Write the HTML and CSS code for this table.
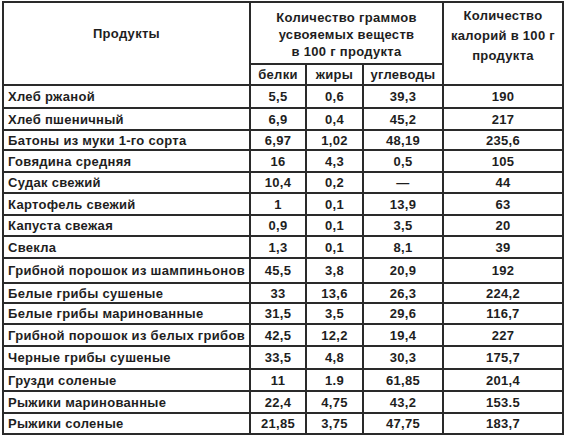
FILE: index.html
```html
<!DOCTYPE html>
<html lang="ru">
<head>
<meta charset="utf-8">
<link rel="stylesheet" href="styles.css">
</head>
<body>
<table class="tbl">
  <colgroup>
    <col class="c-name"><col class="c-b"><col class="c-f"><col class="c-u"><col class="c-k">
  </colgroup>
  <thead>
    <tr class="h1">
      <th rowspan="2" class="hname">Продукты</th>
      <th colspan="3" class="hgroup">Количество граммов<br>усвояемых веществ<br>в 100 г продукта</th>
      <th rowspan="2" class="hkal">Количество<br>калорий в 100 г<br>продукта</th>
    </tr>
    <tr class="h2">
      <th>белки</th><th>жиры</th><th>углеводы</th>
    </tr>
  </thead>
  <tbody>
    <tr class="r23"><td class="n">Хлеб ржаной</td><td>5,5</td><td>0,6</td><td>39,3</td><td>190</td></tr>
    <tr class="r22"><td class="n">Хлеб пшеничный</td><td>6,9</td><td>0,4</td><td>45,2</td><td>217</td></tr>
    <tr class="r20"><td class="n">Батоны из муки 1-го сорта</td><td>6,97</td><td>1,02</td><td>48,19</td><td>235,6</td></tr>
    <tr class="r22"><td class="n">Говядина средняя</td><td>16</td><td>4,3</td><td>0,5</td><td>105</td></tr>
    <tr class="r21"><td class="n">Судак свежий</td><td>10,4</td><td>0,2</td><td>—</td><td>44</td></tr>
    <tr class="r22"><td class="n">Картофель свежий</td><td>1</td><td>0,1</td><td>13,9</td><td>63</td></tr>
    <tr class="r21"><td class="n">Капуста свежая</td><td>0,9</td><td>0,1</td><td>3,5</td><td>20</td></tr>
    <tr class="r22"><td class="n">Свекла</td><td>1,3</td><td>0,1</td><td>8,1</td><td>39</td></tr>
    <tr class="r25"><td class="n">Грибной порошок из шампиньонов</td><td>45,5</td><td>3,8</td><td>20,9</td><td>192</td></tr>
    <tr class="r20"><td class="n">Белые грибы сушеные</td><td>33</td><td>13,6</td><td>26,3</td><td>224,2</td></tr>
    <tr class="r21"><td class="n">Белые грибы маринованные</td><td>31,5</td><td>3,5</td><td>29,6</td><td>116,7</td></tr>
    <tr class="r22"><td class="n">Грибной порошок из белых грибов</td><td>42,5</td><td>12,2</td><td>19,4</td><td>227</td></tr>
    <tr class="r23"><td class="n">Черные грибы сушеные</td><td>33,5</td><td>4,8</td><td>30,3</td><td>175,7</td></tr>
    <tr class="r22"><td class="n">Грузди соленые</td><td>11</td><td>1.9</td><td>61,85</td><td>201,4</td></tr>
    <tr class="r22"><td class="n">Рыжики маринованные</td><td>22,4</td><td>4,75</td><td>43,2</td><td>153.5</td></tr>
    <tr class="r21"><td class="n">Рыжики соленые</td><td>21,85</td><td>3,75</td><td>47,75</td><td>183,7</td></tr>
  </tbody>
</table>
</body>
</html>
```

FILE: styles.css
```css
html, body {
  margin: 0;
  padding: 0;
  background: #ffffff;
}
body {
  padding: 1px 0 0 2px;
}
.tbl {
  border-collapse: collapse;
  table-layout: fixed;
  width: 562px;
  font-family: "Liberation Sans", Arial, sans-serif;
  font-weight: bold;
  font-size: 13px;
  color: #1e1e1e;
  letter-spacing: 0.3px;
}
.c-name { width: 247px; }
.c-b { width: 56px; }
.c-f { width: 57px; }
.c-u { width: 80px; }
.c-k { width: 120px; }
.tbl th, .tbl td {
  border: 2px solid #2a2a2a;
  padding: 0;
  text-align: center;
  vertical-align: middle;
  white-space: nowrap;
}
.tbl th { font-weight: bold; }
.h1 { height: 62px; }
.h2 { height: 21px; }
.tbl .hgroup { line-height: 17px; padding-top: 2px; }
.tbl .hkal { line-height: 20px; vertical-align: top; padding-top: 3px; }
.tbl .hname { padding-bottom: 20px; }
.tbl td.n { text-align: left; padding-left: 4px; }
.r20 { height: 20px; }
.r21 { height: 21px; }
.r22 { height: 22px; }
.r23 { height: 23px; }
.r25 { height: 25px; }
```
